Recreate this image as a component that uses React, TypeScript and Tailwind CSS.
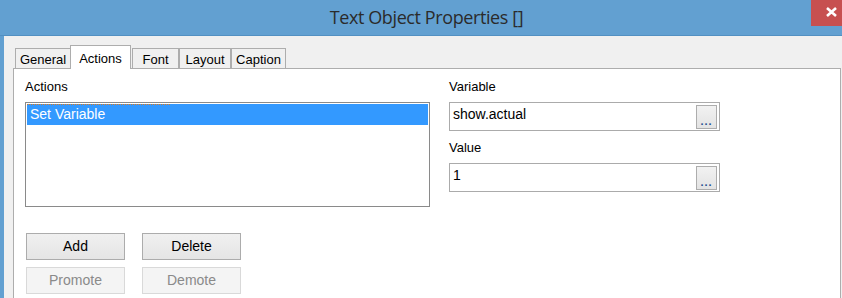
import React from "react";

const tabs = [
  { label: "General", w: "w-[56px]" },
  { label: "Actions", w: "w-[61px]", active: true },
  { label: "Font", w: "w-[47px]" },
  { label: "Layout", w: "w-[52px]" },
  { label: "Caption", w: "w-[55px]" },
];

const Field: React.FC<{ label: string; value: string; className?: string }> = ({ label, value, className }) => (
  <div className={`flex flex-col ${className ?? ""}`}>
    <div className="h-[16px] leading-[16px] text-[13px] text-black">{label}</div>
    <div className="mt-[7px] h-[29px] w-[271px] border border-[#ababab] bg-white flex items-start pl-[3px] pr-[2px] pt-[1px]">
      <span className="flex-1 text-[14px] leading-[20px] text-black">{value}</span>
      <div className="mt-px h-[24px] w-[21px] border border-[#adadad] bg-gradient-to-b from-[#f2f2f2] to-[#e3e3e3] flex items-end justify-center pb-[3px]">
        <span className="text-[11px] leading-[8px] text-[#1f4f8f] tracking-[1px] font-bold">...</span>
      </div>
    </div>
  </div>
);

const Button: React.FC<{ label: string; disabled?: boolean }> = ({ label, disabled }) => (
  <div
    className={`h-[27px] w-[99px] flex items-center justify-center text-[14px] border ${
      disabled
        ? "border-[#d9d9d9] bg-[#f4f4f4] text-[#8a8a8a]"
        : "border-[#acacac] bg-gradient-to-b from-[#f0f0f0] to-[#e5e5e5] text-black"
    }`}
  >
    {label}
  </div>
);

export default function App() {
  return (
    <div
      className="w-[842px] h-[298px] overflow-hidden bg-[#f0f0f0] flex flex-col"
      style={{ fontFamily: '"Liberation Sans", Arial, sans-serif' }}
    >
      {/* Title bar */}
      <div className="h-[36px] shrink-0 bg-[#62a0d1] border-b border-[#5290c2] flex">
        <div
          className="flex-1 pl-[42px] flex items-center justify-center text-[18px] tracking-[-0.4px] text-[#2b2b2b] pb-[1px]"
          style={{ fontFamily: '"Open Sans", "Noto Sans", sans-serif' }}
        >
          Text Object Properties []
        </div>
        <div className="w-[31px] h-[26px] bg-[#c75050] flex items-start pl-[15px] pt-[7px]">
          <svg width="11" height="10" viewBox="0 0 11 10">
            <path d="M1 1 L10 9 M10 1 L1 9" stroke="white" strokeWidth="2.6" strokeLinecap="butt" />
          </svg>
        </div>
      </div>

      {/* Body */}
      <div className="flex shrink-0">
        <div className="w-[4px] bg-[#62a0d1]" />
        <div className="flex-1 pl-[9px] pt-[9px] flex flex-col">
          {/* Tabs */}
          <div className="h-[23px] flex items-end pl-[2px] relative z-10">
            {tabs.map(t =>
              t.active ? (
                <div
                  key={t.label}
                  className={`${t.w} h-[24px] -mb-px -ml-px mr-px border border-b-0 border-[#adadad] bg-white flex items-start justify-center pt-[3px] text-[13px] text-black`}
                >
                  {t.label}
                </div>
              ) : (
                <div
                  key={t.label}
                  className={`${t.w} h-[20px] border border-b-0 border-[#adadad] bg-[#f0f0f0] flex items-center justify-center pt-[2px] text-[13px] text-black`}
                >
                  {t.label}
                </div>
              )
            )}
          </div>

          {/* Panel */}
          <div className="h-[260px] mr-px border border-[#adadad] bg-white pl-[11px] pt-[10px] flex gap-[19px]">
            <div className="w-[405px] flex flex-col">
              <div className="h-[16px] leading-[16px] text-[13px] text-black">Actions</div>
              <div className="mt-[7px] h-[105px] border border-[#8a8a8a] bg-white p-px">
                <div className="relative h-[21px] bg-[#3399ff] text-white text-[14px] leading-[21px] pl-[3px]">
                  <div className="absolute left-0 top-0 w-[143px] border-t border-dotted border-[#e07a1a]" />
                  Set Variable
                </div>
              </div>
              <div className="mt-[26px] ml-px flex flex-col gap-[7px]">
                <div className="flex gap-[17px]">
                  <Button label="Add" />
                  <Button label="Delete" />
                </div>
                <div className="flex gap-[17px]">
                  <Button label="Promote" disabled />
                  <Button label="Demote" disabled />
                </div>
              </div>
            </div>
            <div className="flex flex-col">
              <Field label="Variable" value="show.actual" />
              <Field label="Value" value="1" className="mt-[9px]" />
            </div>
          </div>
        </div>
      </div>
    </div>
  );
}
